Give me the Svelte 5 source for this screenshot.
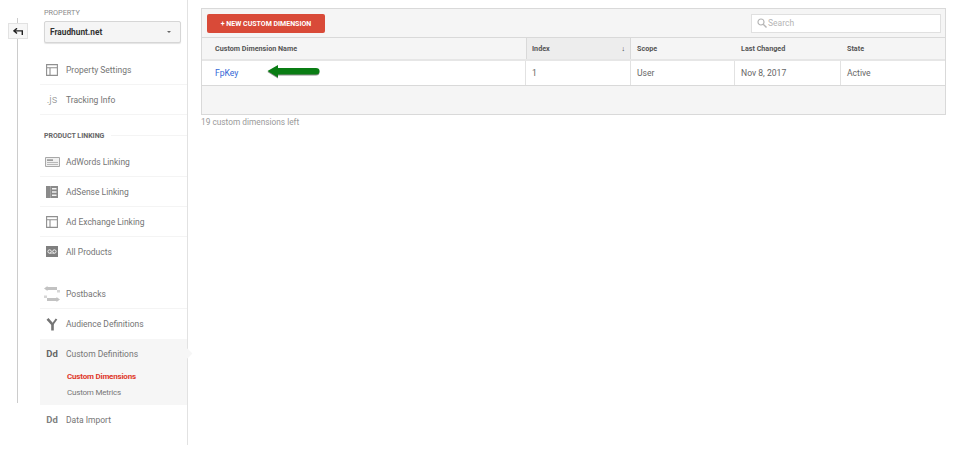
<script>
  const linking = [
    { label: "AdWords Linking", icon: "adwords" },
    { label: "AdSense Linking", icon: "adsense" },
    { label: "Ad Exchange Linking", icon: "layout" },
    { label: "All Products", icon: "products", last: true }
  ];
  const columns = [
    { label: "Custom Dimension Name", cls: "name" },
    { label: "Index", cls: "index" },
    { label: "Scope", cls: "scope" },
    { label: "Last Changed", cls: "changed" },
    { label: "State", cls: "state" }
  ];
</script>

{#snippet icon(kind)}
  {#if kind === "layout"}
    <svg width="12" height="12" viewBox="0 0 12 12"><path d="M.6.6h10.8v10.8H.6zM.6 3.8h10.8M4 3.8v7.6" fill="none" stroke="#8f8f8f" stroke-width="1.1"/></svg>
  {:else if kind === "js"}
    <span class="js">.js</span>
  {:else if kind === "adwords"}
    <svg width="15" height="10" viewBox="0 0 15 10"><path d="M.5.5h14v9H.5z" fill="#f0f0f0" stroke="#a8a8a8"/><path d="M2 2.4h6v1.4H2z" fill="#8a8a8a"/><path d="M2 5h11v1H2zM2 7h11v1H2z" fill="#b8b8b8"/></svg>
  {:else if kind === "adsense"}
    <svg width="12" height="12" viewBox="0 0 12 12"><path d="M0 0h12v12H0z" fill="#8a8a8a"/><path d="M6 2h4.5v1.6H6zM6 5.2h4.5v1.6H6zM6 8.4h4.5V10H6z" fill="#f2f2f2"/><path d="M4.5 0v12" stroke="#b5b5b5" stroke-width=".6"/></svg>
  {:else if kind === "products"}
    <svg width="12" height="11" viewBox="0 0 12 11"><path d="M0 0h12v11H0z" fill="#7f7f7f"/><circle cx="3.6" cy="5.5" r="1.7" fill="none" stroke="#f2f2f2"/><circle cx="8.4" cy="5.5" r="1.7" fill="none" stroke="#f2f2f2"/><path d="M3.6 7.2h4.8" stroke="#f2f2f2" stroke-width=".7"/></svg>
  {:else if kind === "postbacks"}
    <svg width="16" height="16" viewBox="0 0 16 16"><path d="M0 2.5L3.500 0V1H13V4H3.500V5zM16 13.500L12.500 16V15H3V12H12.500V11z" fill="#c2c2c2"/><path d="M13 4h3v2.500h-3zM0 9.500h3V12H0z" fill="#d6d6d6"/></svg>
  {:else if kind === "audience"}
    <svg width="12" height="14" viewBox="0 0 12 14"><path d="M1.500 1.800L6.500 7.500V13.500" fill="none" stroke="#747474" stroke-width="2.600"/><path d="M10.500 2L6.500 7.500" fill="none" stroke="#747474" stroke-width="2"/></svg>
  {:else}
    <span class="dd">Dd</span>
  {/if}
{/snippet}

<div class="page">
  <div class="rail">
    <button class="back" aria-label="Back">
      <svg width="10" height="7" viewBox="0 0 10 7"><path d="M9.300 7V2.900H2.500M4 .3L1 2.900 4 5.500" fill="none" stroke="#222" stroke-width="1.400"/></svg>
    </button>
  </div>

  <nav class="side">
    <div class="prop-label">PROPERTY</div>
    <div class="select">
      <span>Fraudhunt.net</span>
      <i class="caret"></i>
    </div>

    <div class="group first">
      <div class="item"><span class="ico">{@render icon("layout")}</span>Property Settings</div>
      <div class="item"><span class="ico">{@render icon("js")}</span>Tracking Info</div>
    </div>

    <div class="heading"><span>PRODUCT LINKING</span></div>

    <div class="group">
      {#each linking as link}
        <div class="item" class:last={link.last}><span class="ico">{@render icon(link.icon)}</span>{link.label}</div>
      {/each}
    </div>

    <div class="group lower">
      <div class="item"><span class="ico">{@render icon("postbacks")}</span>Postbacks</div>
      <div class="item last"><span class="ico">{@render icon("audience")}</span>Audience Definitions</div>
      <div class="active">
        <div class="item last"><span class="ico">{@render icon("dd")}</span>Custom Definitions</div>
        <div class="sub current">Custom Dimensions</div>
        <div class="sub">Custom Metrics</div>
        <i class="notch"></i>
      </div>
      <div class="item last import"><span class="ico">{@render icon("dd")}</span>Data Import</div>
    </div>
  </nav>

  <main class="main">
    <div class="panel">
      <div class="toolbar">
        <button class="new">+ NEW CUSTOM DIMENSION</button>
        <div class="search">
          <svg width="10" height="10" viewBox="0 0 10 10"><circle cx="4" cy="4" r="3" fill="none" stroke="#b5b5b5" stroke-width="1.2"/><path d="M6.200 6.200L9.500 9.500" stroke="#b5b5b5" stroke-width="1.400"/></svg>
          <span>Search</span>
        </div>
      </div>
      <div class="row head">
        {#each columns as col}
          <div class="cell {col.cls}">
            {col.label}
            {#if col.cls === "index"}<span class="sort">↓</span>{/if}
          </div>
        {/each}
      </div>
      <div class="row body">
        <div class="cell name">
          <a href="#top" class="link">FpKey</a>
          <svg class="arrow" width="56" height="18" viewBox="0 0 56 18">
            <path d="M.5 7L11 1V4H49Q52.500 4 52.500 7Q52.500 10.500 49 10.500H11V13.500Z" fill="#0a7d14" class="arrow-shape"/>
          </svg>
        </div>
        <div class="cell index">1</div>
        <div class="cell scope">User</div>
        <div class="cell changed">Nov 8, 2017</div>
        <div class="cell state">Active</div>
      </div>
      <div class="foot"></div>
    </div>
    <div class="left">19 custom dimensions left</div>
  </main>
</div>

<style>
  :global(body) {
    margin: 0;
    background: #fff;
    font-family: Roboto, "Liberation Sans", sans-serif;
    color: #666;
    overflow: hidden;
  }

  .page {
    display: flex;
    height: 449px;
    align-items: flex-start;
  }

  .rail {
    width: 40px;
    height: 385px;
    margin-top: 18px;
    flex: none;
    background: linear-gradient(#ccc, #ccc) 17px 0 / 1px 100% no-repeat;
  }

  .back {
    display: flex;
    align-items: center;
    justify-content: center;
    width: 20px;
    height: 16px;
    margin: 5px 0 0 8px;
    padding: 0;
    background: #f7f7f7;
    border: 1px solid #e2e2e2;
    box-sizing: border-box;
  }

  .side {
    width: 147px;
    height: 445px;
    flex: none;
    border-right: 1px solid #e2e2e2;
  }

  .prop-label {
    font-size: 7.3px;
    line-height: 10px;
    margin: 8px 0 0 4px;
    color: #8b8b8b;
  }

  .select {
    display: flex;
    align-items: center;
    justify-content: space-between;
    box-sizing: border-box;
    width: 137px;
    height: 22px;
    margin: 3px 0 0 4px;
    padding: 0 9px 0 5px;
    background: #f5f5f5;
    border: 1px solid #d6d6d6;
    border-radius: 2px;
    box-shadow: 0 1px 1px #e4e4e4;
    font-size: 8.3px;
    font-weight: 700;
    color: #333;
  }

  .caret {
    border: 2.5px solid transparent;
    border-top: 2.500px solid #666;
    border-bottom: 0;
  }

  .group.first {
    margin-top: 12px;
  }

  .group.lower {
    margin-top: 12px;
  }

  .item {
    display: flex;
    align-items: center;
    height: 30px;
    box-sizing: border-box;
    border-bottom: 1px solid #f4f4f4;
    font-size: 8.5px;
    color: #757575;
  }

  .item.last {
    border-bottom-color: transparent;
  }

  .ico {
    display: flex;
    align-items: center;
    justify-content: center;
    box-sizing: border-box;
    width: 26px;
    padding-right: 2px;
    flex: none;
  }

  .js {
    font-size: 11px;
    color: #888;
    font-weight: 300;
  }

  .dd {
    font-size: 9.500px;
    font-weight: 700;
    color: #666;
  }

  .import .dd {
    color: #808080;
  }

  .heading {
    display: flex;
    align-items: center;
    gap: 7px;
    height: 15px;
    margin: 13px 0 4px 4px;
    font-size: 7px;
    font-weight: 700;
    color: #666;
  }

  .heading::after {
    content: "";
    flex: 1;
    height: 1px;
    background: #f4f4f4;
  }

  .active {
    background: #f6f6f6;
    height: 66px;
    position: relative;
  }

  .sub {
    font-size: 8px;
    letter-spacing: -0.2px;
    line-height: 16px;
    padding-left: 27px;
    color: #777;
  }

  .sub.current {
    font-weight: 700;
    color: #e0392b;
  }

  .notch {
    position: absolute;
    right: -4px;
    top: 11px;
    width: 7px;
    height: 7px;
    background: #f6f6f6;
    transform: rotate(45deg);
  }

  .main {
    width: 745px;
    margin: 8px 0 0 13px;
    flex: none;
  }

  .panel {
    border: 1px solid #d9d9d9;
    background: #f5f5f5;
  }

  .toolbar {
    display: flex;
    align-items: center;
    justify-content: space-between;
    height: 28px;
    padding: 0 4px 0 5px;
  }

  .new {
    height: 19px;
    width: 118px;
    margin-top: 1px;
    padding: 0;
    border: 0;
    border-radius: 2px;
    background: #d94a38;
    color: #fff;
    font-family: inherit;
    font-size: 7px;
    font-weight: 700;
  }

  .search {
    display: flex;
    align-items: center;
    gap: 1px;
    box-sizing: border-box;
    width: 190px;
    height: 19px;
    padding-left: 5px;
    background: #fff;
    border: 1px solid #e0e0e0;
    font-size: 8.500px;
    color: #b5b5b5;
  }

  .row {
    display: flex;
    border-top: 1px solid #d9d9d9;
  }

  .cell {
    box-sizing: border-box;
    display: flex;
    align-items: center;
    padding-left: 6px;
    border-right: 1px solid #e2e2e2;
    position: relative;
  }

  .cell:last-child {
    border-right: 0;
  }

  .name { width: 324px; padding-left: 13px; }
  .index { width: 105px; }
  .scope { width: 104px; }
  .changed { width: 106px; }
  .state { flex: 1; }

  .head {
    height: 21px;
    font-size: 7.200px;
    font-weight: 700;
    color: #555;
    background: #f5f5f5;
  }

  .head .cell {
    border-right: 0;
  }

  .head .index {
    background: #ededed;
    border-left: 1px solid #d9d9d9;
    border-right: 1px solid #d9d9d9;
    justify-content: space-between;
    padding: 0 5px 0 5px;
  }

  .sort {
    font-size: 7px;
    font-weight: 700;
    color: #333;
  }

  .body {
    height: 24px;
    box-sizing: content-box;
    background: #fff;
    font-size: 8.600px;
    color: #666;
    border-top: 2px solid #e6e6e6;
  }

  .link {
    color: #3367d6;
    text-decoration: none;
  }

  .arrow {
    position: absolute;
    left: 65px;
    top: 3px;
  }

  .arrow-shape {
    filter: drop-shadow(0.5px 1px 0.7px rgba(0, 0, 0, 0.45));
  }

  .foot {
    height: 28px;
    border-top: 1px solid #d9d9d9;
  }

  .left {
    margin-top: 2px;
    font-size: 8.300px;
    color: #9a9a9a;
  }
</style>
